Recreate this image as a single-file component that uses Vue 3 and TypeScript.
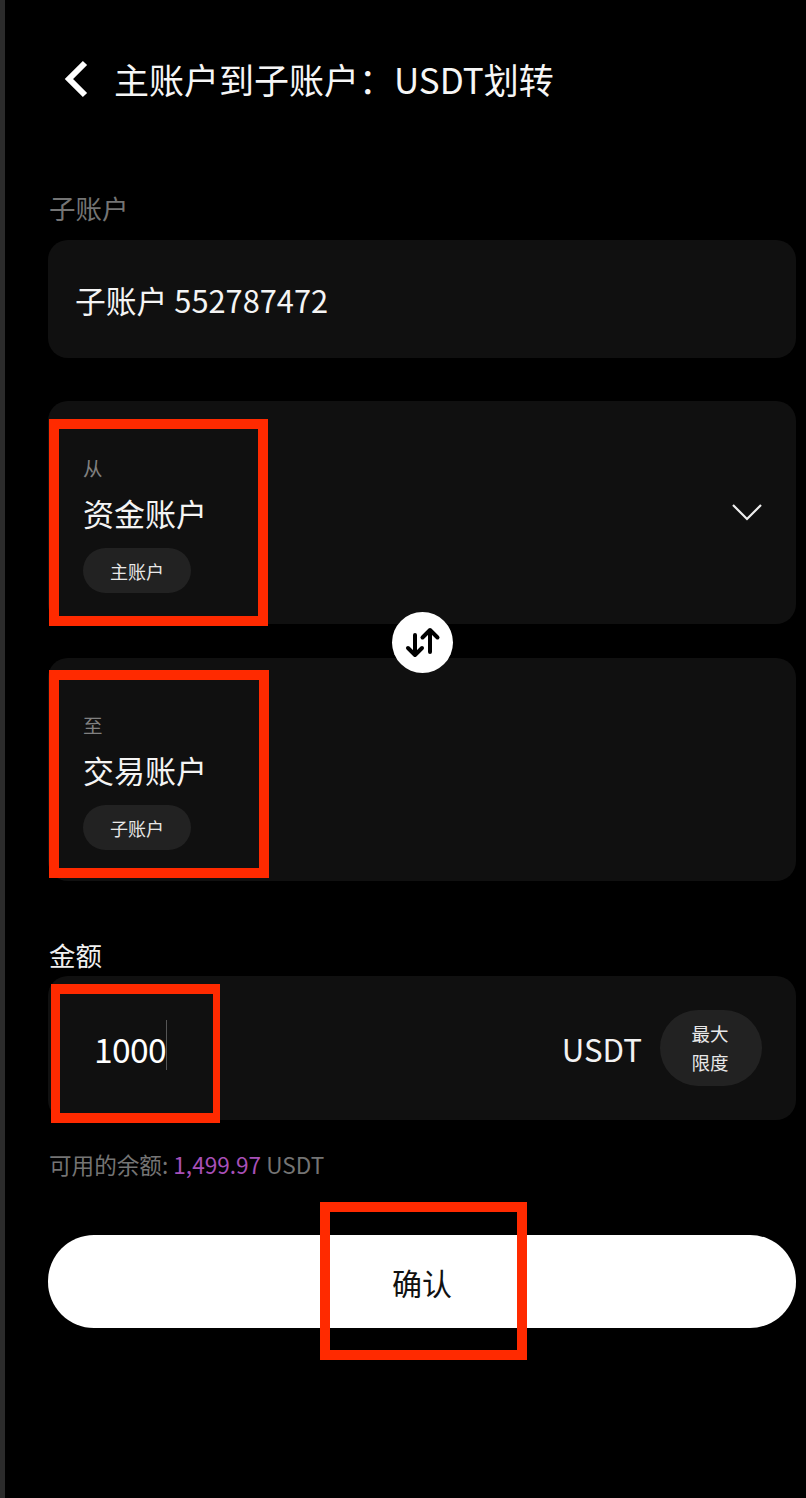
<script setup lang="ts">
const accounts = [
  { dir: '从', name: '资金账户', tag: '主账户', arrow: true },
  { dir: '至', name: '交易账户', tag: '子账户', arrow: false },
]
</script>

<template>
  <div class="page">
    <div class="strip"></div>
    <main class="main">
      <header class="header">
        <svg class="back" viewBox="0 0 26 38" width="26" height="38" fill="none">
          <path d="M22 3 L6 19 L22 35" stroke="#fff" stroke-width="6" stroke-linejoin="miter" />
        </svg>
        <h1 class="title">主账户到子账户：USDT划转</h1>
      </header>

      <div class="label muted">子账户</div>
      <div class="card sub">子账户 552787472</div>

      <section class="transfer">
        <div v-for="a in accounts" :key="a.dir" class="card account">
          <div class="acc-info">
            <div class="dir">{{ a.dir }}</div>
            <div class="name">{{ a.name }}</div>
            <div class="tag">{{ a.tag }}</div>
          </div>
          <svg v-if="a.arrow" class="chev" viewBox="0 0 30 18" width="30" height="18" fill="none">
            <path d="M1 2 L15 16 L29 2" stroke="#eee" stroke-width="2.2" />
          </svg>
        </div>
        <div class="swap">
          <svg viewBox="0 0 36 32" width="36" height="32" fill="none" stroke="#000" stroke-width="4" stroke-linecap="round" stroke-linejoin="round">
            <path d="M10 8 V28 M3 21 L10 28 L17 21" />
            <path d="M25 25 V3 M17.500 10.500 L25 3 L32.500 10.500" />
          </svg>
        </div>
      </section>

      <div class="label amount-label">金额</div>
      <div class="card amount">
        <div class="value"><span>1000</span><i class="caret"></i></div>
        <div class="unit">USDT</div>
        <div class="max">最大<br />限度</div>
      </div>

      <div class="balance">可用的余额: <span class="num">1,499.97</span> USDT</div>

      <button class="confirm">确认</button>
    </main>

    <div class="mark m1"></div>
    <div class="mark m2"></div>
    <div class="mark m3"></div>
    <div class="mark m4"></div>
  </div>
</template>

<style>
html, body { margin: 0; background: #000; }
</style>

<style scoped>
.page {
  position: relative;
  display: flex;
  width: 806px;
  height: 1498px;
  overflow: hidden;
  background: #000;
  color: #fff;
  font-family: "Noto Sans CJK SC", "Noto Sans", sans-serif;
  font-weight: 400;
}
.strip { flex: none; width: 5px; background: #2b2b2b; }
.main { flex: 1; display: flex; flex-direction: column; padding: 0 10px 0 43px; min-width: 0; }
.header { display: flex; align-items: center; height: 38px; margin-top: 60px; padding-left: 15px; gap: 26px; }
.back { flex: none; }
.title { margin: 0; font-size: 35px; font-weight: 400; line-height: 44px; white-space: nowrap; margin-left: -1px; color: #f6f6f6; }
.label { font-size: 26.500px; line-height: 36px; padding-left: 1px; }
.muted { color: #747474; margin-top: 92px; }
.card { background: #101010; border-radius: 20px; }
.sub { display: flex; align-items: center; height: 118px; margin-top: 14px; padding-left: 27px; font-size: 30.800px; color: #f4f4f4; }
.transfer { position: relative; display: flex; flex-direction: column; gap: 34px; margin-top: 43px; }
.account { display: flex; align-items: flex-start; justify-content: space-between; height: 223px; box-sizing: border-box; padding: 0 34px 0 35px; }
.acc-info { display: flex; flex-direction: column; align-items: flex-start; padding-top: 53px; }
.dir { font-size: 19.500px; line-height: 28px; color: #808080; }
.name { font-size: 31px; line-height: 42px; margin-top: 10px; color: #f4f4f4; }
.tag { display: flex; align-items: center; justify-content: center; width: 108px; height: 45px; margin-top: 14px; border-radius: 23px; background: #222; font-size: 18px; color: #e8e8e8; }
.chev { margin-top: 102px; }
.swap { position: absolute; left: 344px; top: 211px; display: flex; align-items: center; justify-content: center; width: 61px; height: 61px; border-radius: 50%; background: #fff; }
.amount-label { margin-top: 56px; color: #f0f0f0; }
.amount { display: flex; align-items: center; height: 144px; margin-top: 3px; padding: 0 34px 0 46px; }
.value { display: flex; align-items: center; font-size: 33.600px; letter-spacing: -0.6px; }
.caret { display: block; width: 1px; height: 50px; background: #555; margin-top: -6px; }
.unit { margin-left: auto; font-size: 31.300px; color: #f2f2f2; }
.max { display: flex; align-items: center; justify-content: center; text-align: center; width: 102px; height: 76px; margin-left: 18px; border-radius: 38px; background: #222; font-size: 18.500px; line-height: 29px; color: #e8e8e8; padding-right: 2px; box-sizing: border-box; }
.balance { margin-top: 30px; padding-left: 1px; font-size: 22.600px; line-height: 30px; color: #747474; }
.num { color: #a850b8; }
.confirm { height: 93px; margin-top: 55px; padding: 0; border: 0; border-radius: 46px; background: #fff; color: #111; font: inherit; font-size: 30px; font-weight: 400; }
.mark { position: absolute; box-sizing: border-box; border: 10px solid #ff2a00; pointer-events: none; }
.m1 { left: 49px; top: 419px; width: 219px; height: 207px; }
.m2 { left: 49px; top: 670px; width: 220px; height: 208px; }
.m3 { left: 51px; top: 984px; width: 169px; height: 139px; border-left-width: 9px; border-right-width: 7px; }
.m4 { left: 320px; top: 1202px; width: 207px; height: 158px; }
</style>
